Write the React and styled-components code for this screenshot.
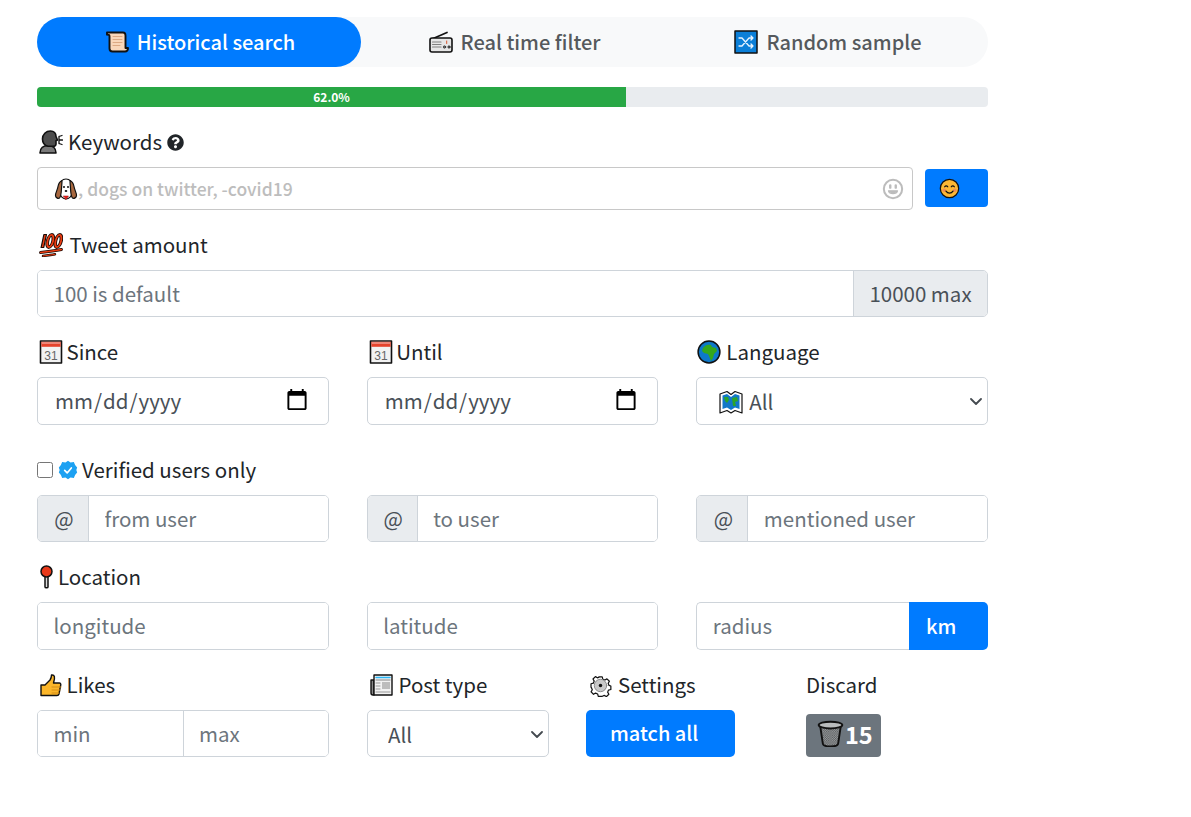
import React from 'react';
import styled, { createGlobalStyle } from 'styled-components';
import { FaQuestionCircle } from 'react-icons/fa';

const FONT = '"Noto Sans CJK SC", "Noto Sans", sans-serif';

const Global = createGlobalStyle`
  * { box-sizing: border-box; }
  html, body { margin: 0; background: #fff; }
  body { font-family: ${FONT}; color: #212529; }
`;

const Page = styled.form`
  width: 951px;
  margin: 0 0 0 37px;
  padding: 17px 0 60px;
`;
const Tabs = styled.div`
  display: flex;
  height: 50px;
  background: #f8f9fa;
  border-radius: 25px;
`;
const Tab = styled.button`
  flex: ${p => p.$grow} 1 0;
  display: flex;
  align-items: center;
  justify-content: center;
  gap: 8px;
  border: 0;
  padding: 0 0 0 ${p => (p.$active ? 2 : 0)}px;
  border-radius: 25px;
  font: 500 20px/50px ${FONT};
  background: ${p => (p.$active ? '#007bff' : 'transparent')};
  color: ${p => (p.$active ? '#fff' : '#55595d')};
`;
const Track = styled.div`
  height: 20px;
  margin-top: 20px;
  background: #e9ecef;
  border-radius: 4px;
  overflow: hidden;
`;
const Fill = styled.div`
  height: 100%;
  background: #28a745;
  color: #fff;
  font: 700 12px/20px ${FONT};
  text-align: center;
`;
const Section = styled.div`
  margin-top: ${p => p.$top ?? 20}px;
`;
const Label = styled.label`
  display: flex;
  align-items: center;
  gap: ${p => p.$gap ?? 8}px;
  height: 30px;
  padding-left: ${p => p.$pad ?? 0}px;
  margin-bottom: ${p => p.$below ?? 10}px;
  font: 400 20.5px/30px ${FONT};
  color: #212529;
`;
const LabelText = styled.span`
  margin-bottom: 2px;
`;
const Help = styled(FaQuestionCircle)`
  width: 17px;
  height: 17px;
  color: #212529;
`;
const KeywordRow = styled.div`
  display: flex;
  align-items: flex-start;
  gap: 12px;
`;
const KeywordBox = styled.div`
  position: relative;
  flex: 1;
  height: 43px;
  border: 1px solid #c8c8c8;
  border-radius: 4px;
`;
const KeywordInput = styled.input`
  width: 100%;
  height: 100%;
  border: 0;
  outline: 0;
  background: none;
  padding: 0 40px;
  font: 500 17.5px ${FONT};
  &::placeholder { color: #bdbdbd; opacity: 1; }
`;
const DogSlot = styled.span`
  position: absolute;
  left: 16px;
  top: 9px;
  line-height: 0;
`;
const SmileSlot = styled.span`
  position: absolute;
  right: 8px;
  top: 10px;
  line-height: 0;
`;
const EmojiButton = styled.button`
  width: 63px;
  height: 38px;
  margin-top: 2px;
  border: 0;
  border-radius: 4px;
  background: #007bff;
  padding: 0 0 0 14px;
  display: flex;
  align-items: center;
`;
const Group = styled.div`
  display: flex;
  height: ${p => p.$h ?? 47}px;
  border: 1px solid #ced4da;
  border-radius: 5px;
  overflow: hidden;
`;
const Field = styled.input`
  flex: 1;
  min-width: 0;
  height: 100%;
  width: 100%;
  border: 0;
  outline: 0;
  padding: 0 15.5px 2px;
  background: #fff;
  font: 400 20.5px ${FONT};
  color: #495057;
  &::placeholder { color: #6c757d; opacity: 1; }
  & + & { border-left: 1px solid #ced4da; }
`;
const Addon = styled.span`
  display: flex;
  align-items: center;
  justify-content: center;
  flex: 0 0 ${p => p.$w}px;
  padding: 0 0 2px ${p => (p.$end ? 0 : 2)}px;
  background: #e9ecef;
  color: #495057;
  font: 400 20.5px ${FONT};
  ${p => (p.$end ? 'border-left: 1px solid #ced4da;' : 'border-right: 1px solid #ced4da;')}
`;
const Columns = styled.div`
  display: grid;
  grid-template-columns: repeat(3, minmax(0, 1fr));
  column-gap: 38px;
`;
const DateField = styled.input`
  width: 100%;
  height: 48px;
  border: 1px solid #ced4da;
  border-radius: 5px;
  outline: 0;
  background: #fff;
  padding: 0 19px 2px 16px;
  font: 400 20.5px ${FONT};
  color: #495057;
  &::-webkit-calendar-picker-indicator {
    width: 24px;
    height: 24px;
    padding: 0;
    margin: 0;
  }
`;
const SelectWrap = styled.div`
  position: relative;
`;
const MapSlot = styled.span`
  position: absolute;
  left: 23px;
  top: 13px;
  line-height: 0;
`;
const ChevronSlot = styled.span`
  position: absolute;
  right: 6px;
  top: 50%;
  margin-top: -3px;
  line-height: 0;
  pointer-events: none;
`;
const Select = styled.select`
  appearance: none;
  width: 100%;
  height: ${p => p.$h}px;
  border: 1px solid #ced4da;
  border-radius: 5px;
  outline: 0;
  background: #fff;
  padding-left: ${p => p.$pad}px;
  font: 400 20.5px ${FONT};
  color: #495057;
`;
const Check = styled.input`
  width: 16px;
  height: 16px;
  margin: 0 1px 0 0;
`;
const RadiusRow = styled.div`
  display: flex;
  height: 48px;
`;
const RadiusField = styled.input`
  flex: 1;
  min-width: 0;
  border: 1px solid #ced4da;
  border-right: 0;
  border-radius: 5px 0 0 5px;
  outline: 0;
  padding: 0 15.5px 2px;
  font: 400 20.5px ${FONT};
  &::placeholder { color: #6c757d; opacity: 1; }
`;
const BlueButton = styled.button`
  width: ${p => p.$w}px;
  height: ${p => p.$h}px;
  border: 0;
  border-radius: ${p => p.$radius ?? '5px'};
  background: #007bff;
  color: #fff;
  padding: 0 0 2px ${p => p.$pad}px;
  text-align: left;
  font: 500 20px ${FONT};
`;
const BottomRow = styled.div`
  display: flex;
  margin-top: 20px;
`;
const Cell = styled.div`
  width: ${p => p.$w}px;
  margin-left: ${p => p.$left ?? 0}px;
  flex: none;
`;
const DiscardButton = styled.button`
  display: flex;
  align-items: center;
  gap: 1px;
  width: 75px;
  height: 43px;
  border: 0;
  border-radius: 4px;
  padding: 0 0 4px 11px;
  background: #6c757d;
  color: #fff;
  font: 700 23.5px ${FONT};
`;

const Svg = ({ size = 24, children }) => (
  <svg width={size} height={size} viewBox="0 0 24 24" fill="none" stroke="#111" strokeWidth="1.4" strokeLinejoin="round" strokeLinecap="round">
    {children}
  </svg>
);

const Chevron = () => (
  <svg width="12" height="7" viewBox="0 0 12 7" fill="none" stroke="#444a50" strokeWidth="1.800" strokeLinecap="round" strokeLinejoin="round">
    <path d="M1 1l5 5 5-5" />
  </svg>
);

const Scroll = () => (
  <Svg>
    <path d="M2 2.500h16c2 0 2.500 1 2.500 3V18H23c0 2.500-1 3.500-3 3.500H7.500c-2 0-3-1-3-3V6c0-1.200-1-1.500-2.500-1.300z" fill="#f9d7ba" strokeWidth="1.900" />
    <path d="M8 6.500h9M8 9.500h9M8 12.500h9M8 15.500h7" stroke="#dca983" strokeWidth="1" />
  </Svg>
);
const Radio = () => (
  <Svg>
    <path d="M3 9 18 2.500" strokeWidth="1.700" />
    <rect x="1" y="8" width="22" height="14" rx="2" fill="#e6e6e6" strokeWidth="1.600" />
    <path d="M3.500 12h8.500M3.500 14.500h8.500M3.500 17h8.500" stroke="#808080" strokeWidth="1.200" />
    <circle cx="15.500" cy="17" r="1.200" fill="#777" strokeWidth=".6" />
    <circle cx="20" cy="17" r="1.200" fill="#777" strokeWidth=".6" />
    <path d="M17.700 11v2.500" stroke="#d8552f" strokeWidth="1" />
  </Svg>
);
const Shuffle = () => (
  <Svg>
    <rect x="1" y="1" width="22" height="22" fill="#0b7fd8" strokeWidth="1.500" />
    <path d="M5 8h3l7 8h4M5 16h3l7-8h4M17 6l2 2-2 2M17 14l2 2-2 2" stroke="#e8f4ff" strokeWidth="1.300" />
  </Svg>
);
const SpeakingHead = () => (
  <Svg>
    <path d="M1 23c0-5 3.500-7.500 8-7.500s8 2.500 8 7.500z" fill="#7a7a7a" strokeWidth="1.600" />
    <path d="M3.500 9c0-4.800 3.500-8 8-8 3.500 0 5.500 2.500 5.500 5.500l1.500 3.500-1.500.8V14c0 1.500-1.500 2.300-3 2.300H9C6 15.500 3.500 13 3.500 9z" fill="#4d4d4d" strokeWidth="1.600" />
    <path d="M20 6.500l3-1M20 10h3.500M20 13.500l3 1M20 6.500v7" strokeWidth="1.300" />
  </Svg>
);
const Dog = () => (
  <Svg>
    <path d="M12 2C8 2 6 5 6 9v7c0 3 3 6 6 6s6-3 6-6V9c0-4-2-7-6-7z" fill="#fff" strokeWidth="1.200" />
    <path d="M8 3.500C5.500 4.500 4.500 7 4 9.500 3.500 13 1.500 15.500 1.500 18.500c0 2 2.500 3.500 4 2.500 1.500-1.200 1.800-6 2-9.500.2-3 .5-6 .5-8zM16 3.500c2.500 1 3.500 3.500 4 6 .5 3.500 2.500 6 2.500 9 0 2-2.500 3.500-4 2.500-1.500-1.200-1.800-6-2-9.500-.2-3-.5-6-.5-8z" fill="#a8683f" strokeWidth="1.200" />
    <circle cx="10" cy="10" r="1" fill="#111" stroke="none" />
    <circle cx="14" cy="10" r="1" fill="#111" stroke="none" />
    <ellipse cx="12" cy="14" rx="1.300" ry="1" fill="#111" stroke="none" />
    <path d="M9.500 19h5L12 22.500z" fill="#e0201c" stroke="#a00" strokeWidth=".5" />
  </Svg>
);
const GreySmile = () => (
  <svg width="22" height="22" viewBox="0 0 24 24" fill="none" stroke="#bcbcbc" strokeWidth="2.200" strokeLinecap="round" strokeLinejoin="round">
    <circle cx="12" cy="12" r="10" />
    <path d="M7 14h10c-1 4-9 4-10 0z" fill="#bcbcbc" strokeWidth="1.200" />
    <path d="M9 8v2.500M15 8v2.500" strokeWidth="2.600" />
  </svg>
);
const Blush = () => (
  <Svg size={21}>
    <circle cx="12" cy="12" r="10.500" fill="#fbb735" />
    <circle cx="6" cy="14" r="2" fill="#f08a56" stroke="none" />
    <circle cx="18" cy="14" r="2" fill="#f08a56" stroke="none" />
    <path d="M6.500 10c1-1.500 2.500-1.500 3.500 0M14 10c1-1.500 2.500-1.500 3.500 0M8 15c2 3 6 3 8 0" />
  </Svg>
);
const Hundred = () => (
  <Svg>
    <g transform="translate(3 0) skewX(-12)">
      <path d="M2.200 1.500h2.600v13H2.200z" fill="#ee3d12" stroke="#1a0a05" strokeWidth="1.200" />
      <ellipse cx="10" cy="8" rx="2.800" ry="6.200" stroke="#1a0a05" strokeWidth="3.600" />
      <ellipse cx="18" cy="8" rx="2.800" ry="6.200" stroke="#1a0a05" strokeWidth="3.600" />
      <ellipse cx="10" cy="8" rx="2.800" ry="6.200" stroke="#ee3d12" strokeWidth="1.800" />
      <ellipse cx="18" cy="8" rx="2.800" ry="6.200" stroke="#ee3d12" strokeWidth="1.800" />
    </g>
    <path d="M1.500 19.500c7-.8 13-1.500 21-3" stroke="#1a0a05" strokeWidth="2.800" />
    <path d="M4 23c4-.5 8-1 12-1.800" stroke="#1a0a05" strokeWidth="2.400" />
    <path d="M1.500 19.500c7-.8 13-1.500 21-3" stroke="#ee3d12" strokeWidth="1.400" />
    <path d="M4 23c4-.5 8-1 12-1.800" stroke="#ee3d12" strokeWidth="1.100" />
  </Svg>
);
const Calendar = () => (
  <Svg>
    <rect x="1.500" y="1" width="21" height="22" fill="#f2f2f2" strokeWidth="1.600" />
    <rect x="2.300" y="1.800" width="19.400" height="5" fill="#e5432c" stroke="none" />
    <path d="M3.500 3h17" stroke="#fff" strokeWidth=".8" strokeDasharray="1 1" />
    <text x="12" y="19.500" textAnchor="middle" fontFamily="Liberation Sans, sans-serif" fontSize="12" fill="#666" stroke="none">31</text>
  </Svg>
);
const Globe = () => (
  <Svg>
    <circle cx="12" cy="12" r="10.900" fill="#0d79c9" strokeWidth="1.500" />
    <path d="M6 8c2-3 5-4 8-3l1 2 4 1 1 3-3 3-1 4-2 3-2-5-1-2-4-1-2-2z" fill="#34a81c" stroke="none" />
  </Svg>
);
const WorldMap = () => (
  <Svg>
    <path d="M1 4 8 1.500 12 4.500 16 1.500 23 4v19l-7-2.500L12 23l-4-2.500L1 23z" fill="#fff" strokeWidth="1.200" />
    <path d="M3.500 5.500 8 4l4 3 4-3 4.500 1.500V19L16 17.500 12 20l-4-2.500L3.500 19z" fill="#1278c8" stroke="none" />
    <path d="M5 7l4 0 1 3-2 3-2-2zM13 8l5-1 1 4-3 1 1 4-3 0z" fill="#2ca52a" stroke="none" />
  </Svg>
);
const Verified = () => (
  <svg width="20" height="20" viewBox="0 0 24 24" fill="none">
    <path d="M12 1l3 2 4-.5 1.500 3.500L23 9l-1 3 1 3-2.500 3-1.500 3.500-4-.5-3 2-3-2-4 .5L3.500 18 1 15l1-3-1-3 2.500-3L5 2.500 9 3z" fill="#1da1f2" />
    <path d="M8 12.500l3 3 5-6" stroke="#fff" strokeWidth="2" strokeLinecap="round" strokeLinejoin="round" />
  </svg>
);
const Pin = () => (
  <svg width="13" height="24" viewBox="0 0 13 24" fill="none" stroke="#111" strokeWidth="1.500">
    <path d="M5 11v11c0 1 3 1 3 0V11" fill="#ddd" />
    <circle cx="6.500" cy="6.500" r="5.500" fill="#e8391a" />
  </svg>
);
const Thumb = () => (
  <Svg>
    <path d="M2 12h4l5-5c1-1.500 1.500-3 1.500-5 3-.5 4 2 2 8h6c1.500 0 1.500 2 1 3l-1.500 8c-.3 1-1 1.500-2 1.500H2z" fill="#fbb62a" strokeWidth="1.400" />
    <path d="M13 14h9M13 17h8M13 20h7" stroke="#d58c12" strokeWidth="1" />
  </Svg>
);
const Newspaper = () => (
  <Svg>
    <path d="M5 7H2v13c0 1.500 1 2 2 2h1z" fill="#888" />
    <rect x="5" y="2" width="18" height="20" fill="#f2f2f2" />
    <path d="M7 4.500h14" stroke="#29b6f6" strokeWidth="1.500" />
    <path d="M7 7h14" stroke="#888" strokeWidth="1" />
    <rect x="13" y="9" width="8" height="7" fill="#bdbdbd" stroke="none" />
    <path d="M7 10h4M7 13h4M7 16h4M7 19h14" stroke="#999" strokeWidth="1" />
  </Svg>
);
const Gear = () => (
  <Svg size={23}>
    <path d="M10 2h4l.7 2.700 2.400 1 2.400-1.400 2.800 2.800-1.400 2.400 1 2.400 2.100.7v4l-2.700.7-1 2.400 1.400 2.400-2.800 2.800-2.400-1.400-2.400 1-.7 0h-4l-.7-2.700-2.400-1-2.400 1.400-2.800-2.800 1.400-2.400-1-2.400L1 14v-4l2.700-.7 1-2.400-1.400-2.400 2.800-2.800 2.400 1.400 2.400-1z" transform="translate(1.200 1.200) scale(.9)" fill="#fff" />
    <circle cx="12" cy="12" r="6.500" fill="#c9c9c9" stroke="#888" strokeWidth="1" />
    <circle cx="12" cy="12" r="1.800" fill="#111" stroke="none" />
  </Svg>
);
const Trash = () => (
  <Svg size={27}>
    <defs>
      <pattern id="mesh" width="2" height="2" patternUnits="userSpaceOnUse">
        <rect width="2" height="2" fill="#a3a6a8" stroke="none" />
        <rect width="1" height="1" fill="#4f5254" stroke="none" />
        <rect x="1" y="1" width="1" height="1" fill="#4f5254" stroke="none" />
      </pattern>
    </defs>
    <path d="M2.800 5l2.400 16c.2 1.500 2 2.500 6.800 2.500s6.600-1 6.800-2.500l2.400-16z" fill="url(#mesh)" strokeWidth="1.700" />
    <ellipse cx="12" cy="4.500" rx="10.500" ry="3" fill="#b9bcbd" strokeWidth="1.700" />
  </Svg>
);

export default function App() {
  return (
    <>
      <Global />
      <Page onSubmit={e => e.preventDefault()}>
        <Tabs>
          <Tab type="button" $active $grow="322"><Scroll />Historical search</Tab>
          <Tab type="button" $grow="307"><Radio />Real time filter</Tab>
          <Tab type="button" $grow="320"><Shuffle />Random sample</Tab>
        </Tabs>
        <Track><Fill style={{ width: '61.95%' }}>62.0%</Fill></Track>

        <Section>
          <Label $pad={2} $gap={5}><SpeakingHead /><LabelText>Keywords</LabelText><Help /></Label>
          <KeywordRow>
            <KeywordBox>
              <DogSlot><Dog /></DogSlot>
              <KeywordInput placeholder=", dogs on twitter, -covid19" />
              <SmileSlot><GreySmile /></SmileSlot>
            </KeywordBox>
            <EmojiButton type="button"><Blush /></EmojiButton>
          </KeywordRow>
        </Section>

        <Section>
          <Label $pad={2} $gap={6.500}><Hundred /><LabelText>Tweet amount</LabelText></Label>
          <Group>
            <Field placeholder="100 is default" />
            <Addon $end $w={134}>10000 max</Addon>
          </Group>
        </Section>

        <Section>
          <Columns>
            <div>
              <Label $pad={2} $gap={3.500}><Calendar /><LabelText>Since</LabelText></Label>
              <DateField type="date" />
            </div>
            <div>
              <Label $pad={2} $gap={3.500}><Calendar /><LabelText>Until</LabelText></Label>
              <DateField type="date" />
            </div>
            <div>
              <Label $pad={1} $gap={5}><Globe /><LabelText>Language</LabelText></Label>
              <SelectWrap>
                <MapSlot><WorldMap /></MapSlot>
                <Select $h={48} $pad={52}><option>All</option></Select>
                <ChevronSlot><Chevron /></ChevronSlot>
              </SelectWrap>
            </div>
          </Columns>
        </Section>

        <Section $top={30}>
          <Label $gap={4}>
            <Check type="checkbox" />
            <Verified />
            <LabelText>Verified users only</LabelText>
          </Label>
          <Columns>
            <Group><Addon $w={51}>@</Addon><Field placeholder="from user" /></Group>
            <Group><Addon $w={50}>@</Addon><Field placeholder="to user" /></Group>
            <Group><Addon $w={51}>@</Addon><Field placeholder="mentioned user" /></Group>
          </Columns>
        </Section>

        <Section>
          <Label $pad={3} $gap={5}><Pin /><LabelText>Location</LabelText></Label>
          <Columns>
            <Group $h={48}><Field placeholder="longitude" /></Group>
            <Group $h={48}><Field placeholder="latitude" /></Group>
            <RadiusRow>
              <RadiusField placeholder="radius" />
              <BlueButton type="button" $w={79} $h={48} $pad={17} $radius="0 5px 5px 0">km</BlueButton>
            </RadiusRow>
          </Columns>
        </Section>

        <BottomRow>
          <Cell $w={292}>
            <Label $pad={2} $gap={3.500}><Thumb /><LabelText>Likes</LabelText></Label>
            <Group>
              <Field placeholder="min" />
              <Field placeholder="max" />
            </Group>
          </Cell>
          <Cell $w={182} $left={38}>
            <Label $pad={2} $gap={5.500}><Newspaper /><LabelText>Post type</LabelText></Label>
            <SelectWrap>
              <Select $h={47} $pad={20}><option>All</option></Select>
              <ChevronSlot><Chevron /></ChevronSlot>
            </SelectWrap>
          </Cell>
          <Cell $w={149} $left={37}>
            <Label $pad={3} $gap={6}><Gear /><LabelText>Settings</LabelText></Label>
            <BlueButton type="button" $w={149} $h={47} $pad={24}>match all</BlueButton>
          </Cell>
          <Cell $w={75} $left={71}>
            <Label $below={14}><LabelText>Discard</LabelText></Label>
            <DiscardButton type="button"><Trash />15</DiscardButton>
          </Cell>
        </BottomRow>
      </Page>
    </>
  );
}
